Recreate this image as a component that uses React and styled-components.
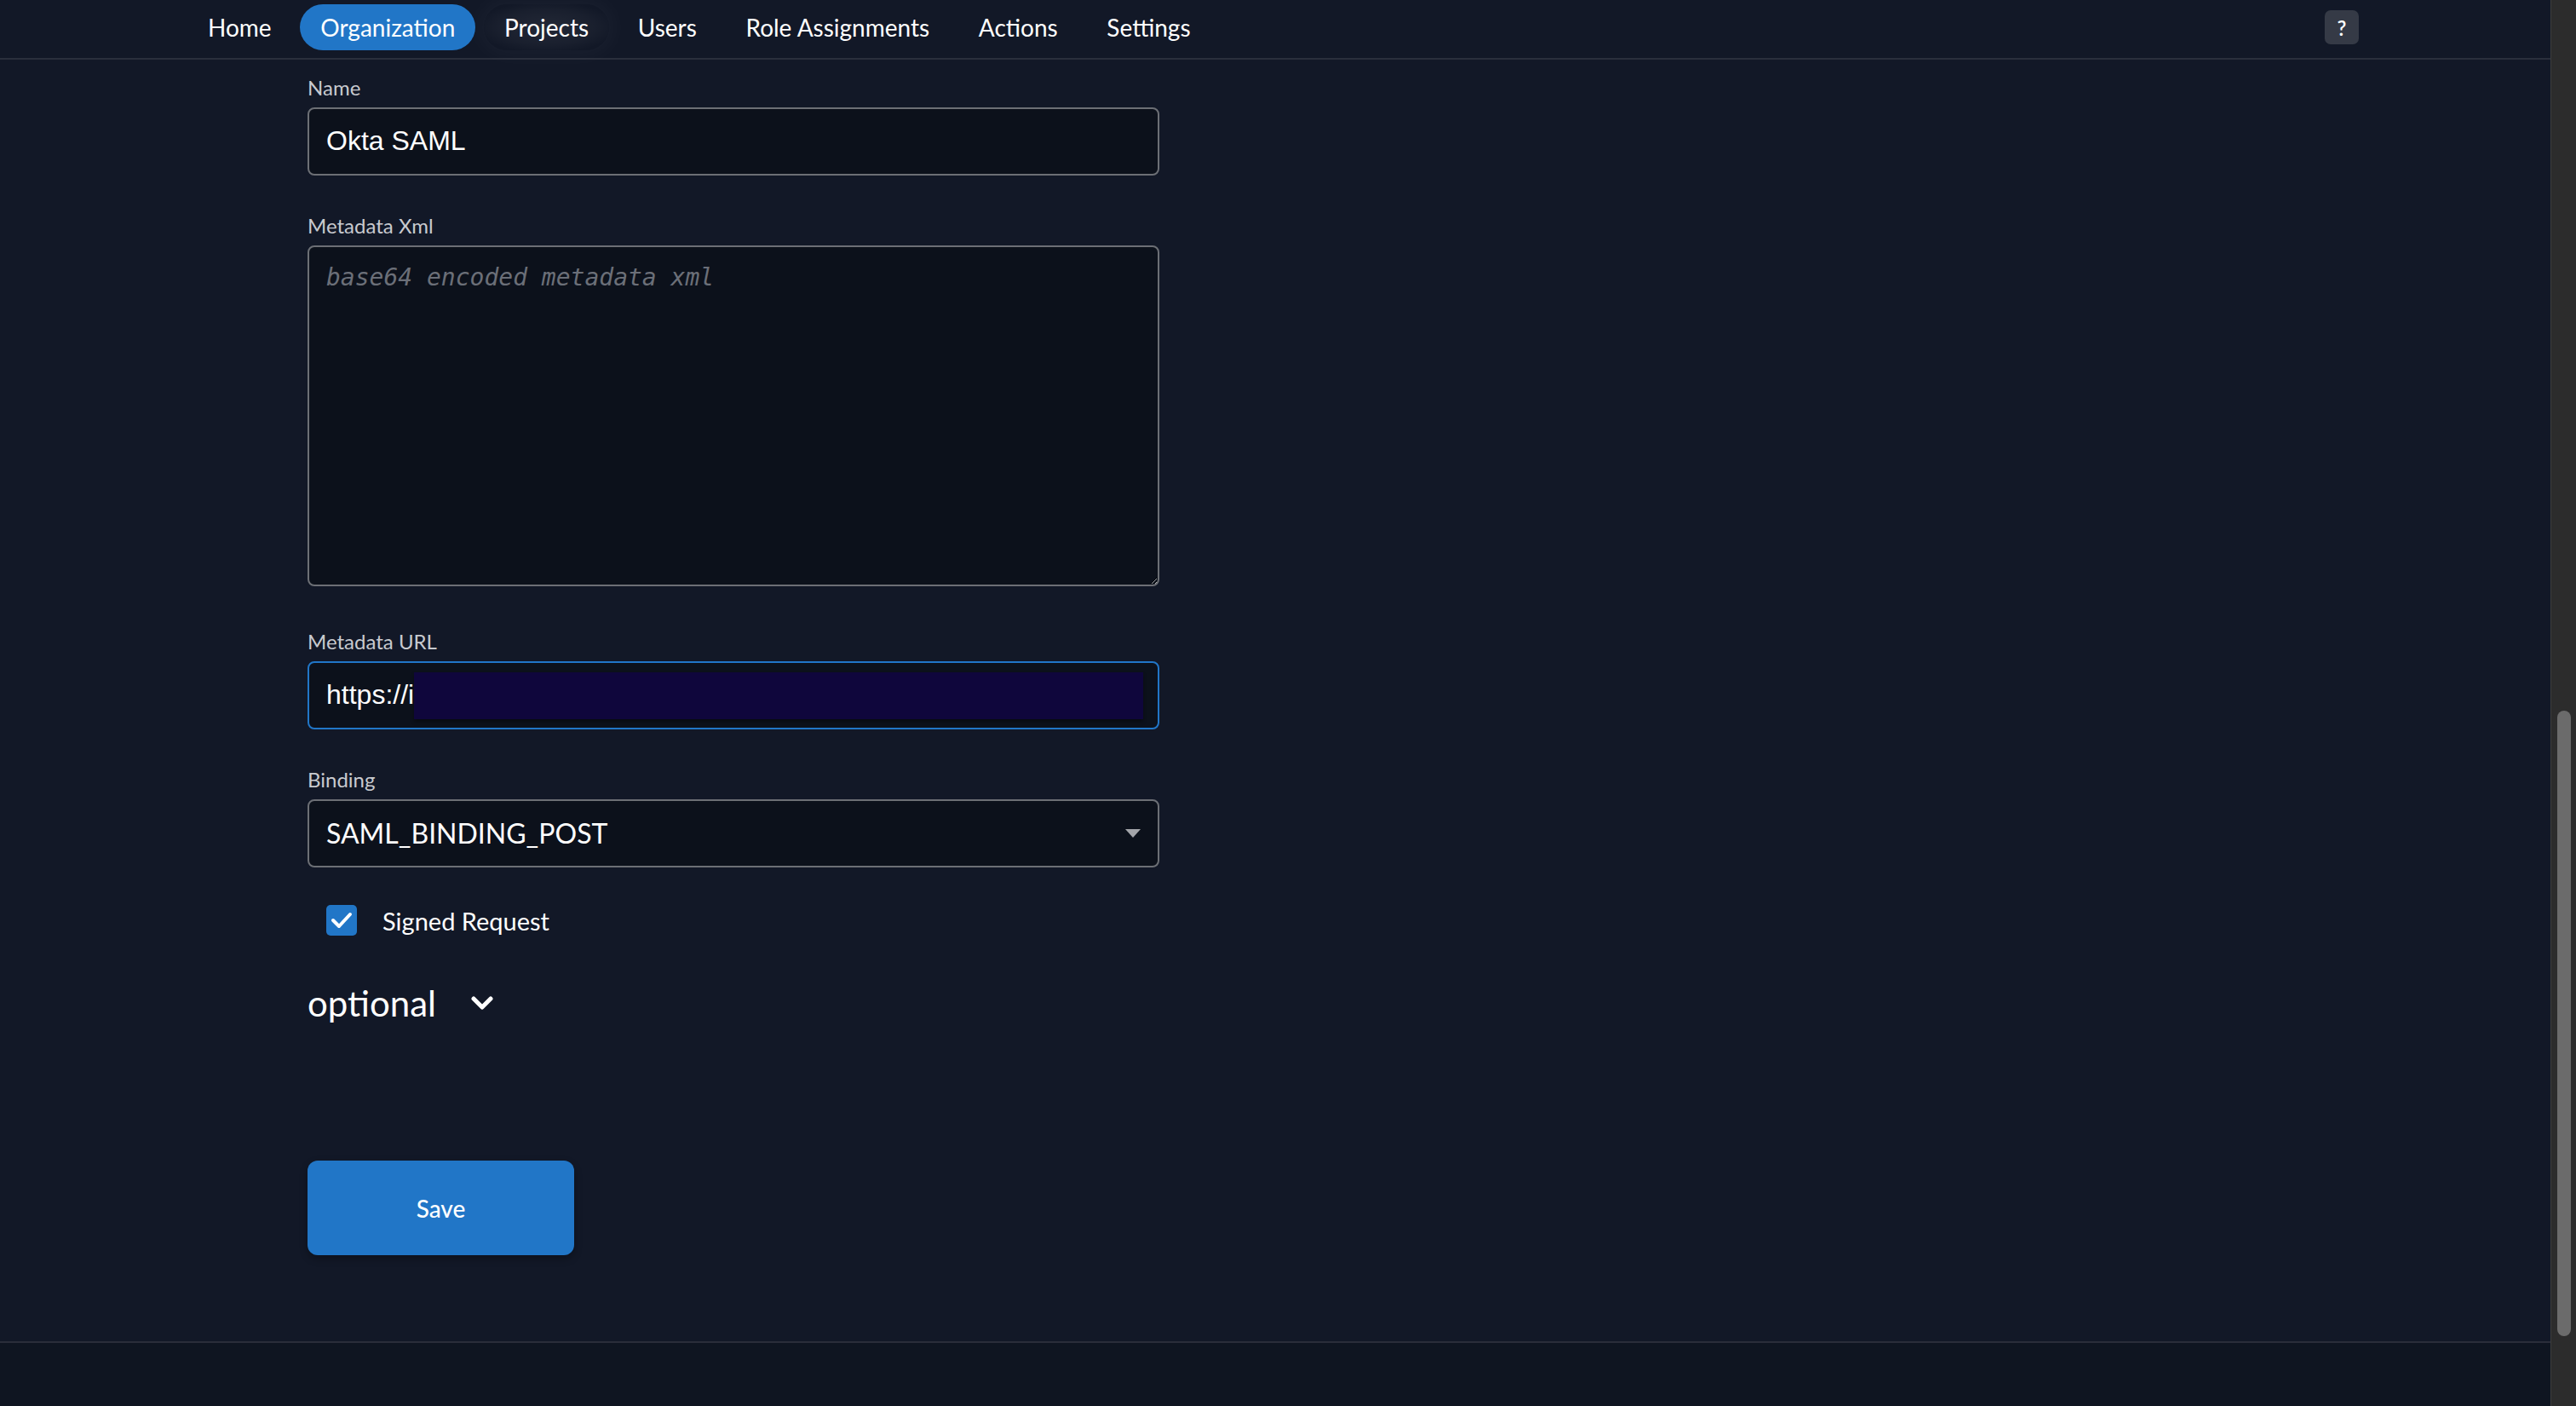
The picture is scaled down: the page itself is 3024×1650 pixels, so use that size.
import React from "react";
import styled, { createGlobalStyle } from "styled-components";

const GlobalStyle = createGlobalStyle`
  html, body {
    margin: 0;
    padding: 0;
    height: 100%;
    overflow: hidden;
    background: #121827;
  }
  #root {
    height: 100%;
  }
  * {
    box-sizing: border-box;
  }
`;

const Page = styled.div`
  display: flex;
  height: 100vh;
  width: 100%;
  font-family: "Lato", "Noto Sans", sans-serif;
  color: #fff;
`;

const MainColumn = styled.div`
  flex: 1;
  display: flex;
  flex-direction: column;
  min-width: 0;
`;

const TopNav = styled.nav`
  height: 70px;
  flex-shrink: 0;
  display: flex;
  align-items: center;
  justify-content: space-between;
  padding: 0 225px 4px 220px;
  background: #121827;
  border-bottom: 2px solid #2a2f3c;
`;

const NavList = styled.div`
  display: flex;
  align-items: center;
  gap: 9.7px;
`;

const NavItem = styled.a`
  height: 54px;
  display: flex;
  align-items: center;
  padding: 0 24px;
  border-radius: 27px;
  font-size: 28px;
  color: #fff;
  text-decoration: none;
  background: ${(p) =>
    p.$active
      ? "#2176c7"
      : p.$hover
      ? "radial-gradient(ellipse at center, rgba(255,255,255,0.07) 0%, rgba(255,255,255,0.03) 55%, rgba(255,255,255,0) 80%)"
      : "transparent"};
  box-shadow: ${(p) => (p.$hover ? "0 0 26px 6px rgba(255,255,255,0.035)" : "none")};
`;

const HelpButton = styled.button`
  width: 40px;
  height: 40px;
  border: none;
  border-radius: 7px;
  background: #353a46;
  color: #fff;
  font-family: "Lato", sans-serif;
  font-size: 24px;
  font-weight: 600;
  display: flex;
  align-items: center;
  justify-content: center;
  padding: 0;
`;

const Content = styled.main`
  flex: 1;
  padding: 18px 0 0 361px;
`;

const Form = styled.form`
  width: 1000px;
  display: flex;
  flex-direction: column;
`;

const Field = styled.div`
  display: flex;
  flex-direction: column;
  margin-bottom: ${(p) => (p.$extra ? 44 + p.$extra : 44)}px;
`;

const Label = styled.label`
  font-size: 24px;
  line-height: 30px;
  color: #c8cacf;
  margin-bottom: 8px;
`;

const TextInput = styled.input`
  height: 80px;
  width: 100%;
  background: #0c111b;
  border: 2px solid #6c6f75;
  border-radius: 8px;
  padding: 0 20px 2px;
  color: #fff;
  font-family: "Liberation Sans", Arial, sans-serif;
  font-size: 32px;
  outline: none;
`;

const TextArea = styled.textarea`
  display: block;
  height: 400px;
  width: 100%;
  background: #0c111b;
  border: 2px solid #6c6f75;
  border-radius: 8px;
  padding: 19px 20px;
  color: #fff;
  font-family: "DejaVu Sans Mono", "Liberation Mono", monospace;
  font-size: 28px;
  resize: vertical;
  outline: none;
  color-scheme: dark;

  &::placeholder {
    color: #6b6f78;
    font-style: italic;
  }
`;

const UrlBox = styled.div`
  height: 80px;
  display: flex;
  align-items: center;
  background: #0c111b;
  border: 2px solid #2176c7;
  border-radius: 8px;
  padding: 0 17px 0 20px;
`;

const UrlText = styled.span`
  font-family: "Liberation Sans", Arial, sans-serif;
  font-size: 32px;
  color: #fff;
  margin-top: -2px;
`;

const Redacted = styled.span`
  flex: 1;
  height: 55px;
  background: #0f063c;
  box-shadow: 0 3px 4px rgba(0, 0, 0, 0.35);
`;

const SelectWrap = styled.div`
  position: relative;
`;

const Select = styled.select`
  appearance: none;
  width: 100%;
  height: 80px;
  background: #0c111b;
  border: 2px solid #6c6f75;
  border-radius: 8px;
  padding: 0 60px 2px 20px;
  color: #fff;
  font-family: "Lato", sans-serif;
  font-size: 32px;
  outline: none;
`;

const Caret = styled.svg`
  position: absolute;
  right: 22px;
  top: 50%;
  transform: translateY(-50%);
  pointer-events: none;
`;

const CheckRow = styled.div`
  display: flex;
  align-items: center;
  gap: 30px;
  padding-left: 22px;
  height: 36px;
`;

const CheckBox = styled.span`
  width: 36px;
  height: 36px;
  border-radius: 5px;
  background: #2176c7;
  display: flex;
  align-items: center;
  justify-content: center;
`;

const CheckText = styled.span`
  font-size: 29px;
  color: #fff;
`;

const OptionalRow = styled.div`
  display: flex;
  align-items: center;
  margin-top: 54px;
  height: 50px;
`;

const OptionalTitle = styled.span`
  font-size: 42px;
  line-height: 50px;
  color: #fff;
`;

const Chevron = styled.svg`
  margin-left: 41px;
`;

const SaveButton = styled.button`
  margin-top: 160px;
  width: 313px;
  height: 111px;
  border: none;
  border-radius: 12px;
  background: #2176c7;
  color: #fff;
  font-family: "Lato", sans-serif;
  font-size: 28px;
  font-weight: 500;
  box-shadow: 0 4px 10px rgba(0, 0, 0, 0.3);
`;

const Footer = styled.footer`
  height: 76px;
  flex-shrink: 0;
  border-top: 2px solid #2a2d3a;
  background: #0f1521;
`;

const ScrollRail = styled.div`
  width: 30px;
  flex-shrink: 0;
  background: #2c2c2c;
  border-left: 1px solid #3d3d3d;
  padding: 834px 0 0 7px;
`;

const ScrollThumb = styled.div`
  width: 16px;
  height: 734px;
  border-radius: 8px;
  background: #6b6b6b;
`;

const navItems = ["Home", "Organization", "Projects", "Users", "Role Assignments", "Actions", "Settings"];

export default function App() {
  return (
    <>
      <GlobalStyle />
      <Page>
        <MainColumn>
          <TopNav>
            <NavList>
              {navItems.map((item) => (
                <NavItem key={item} $active={item === "Organization"} $hover={item === "Projects"}>
                  {item}
                </NavItem>
              ))}
            </NavList>
            <HelpButton type="button">?</HelpButton>
          </TopNav>

          <Content>
            <Form onSubmit={(e) => e.preventDefault()}>
              <Field>
                <Label>Name</Label>
                <TextInput defaultValue="Okta SAML" />
              </Field>

              <Field $extra={6}>
                <Label>Metadata Xml</Label>
                <TextArea placeholder="base64 encoded metadata xml" />
              </Field>

              <Field>
                <Label>Metadata URL</Label>
                <UrlBox>
                  <UrlText>https://i</UrlText>
                  <Redacted />
                </UrlBox>
              </Field>

              <Field>
                <Label>Binding</Label>
                <SelectWrap>
                  <Select defaultValue="SAML_BINDING_POST">
                    <option>SAML_BINDING_POST</option>
                    <option>SAML_BINDING_REDIRECT</option>
                  </Select>
                  <Caret width="18" height="10" viewBox="0 0 18 10">
                    <path d="M0 0 L18 0 L9 10 Z" fill="#a3a5aa" />
                  </Caret>
                </SelectWrap>
              </Field>

              <CheckRow>
                <CheckBox>
                  <svg width="26" height="22" viewBox="0 0 26 22">
                    <polyline
                      points="3,11 10,18 23,4"
                      fill="none"
                      stroke="#fff"
                      strokeWidth="4"
                      strokeLinecap="round"
                      strokeLinejoin="round"
                    />
                  </svg>
                </CheckBox>
                <CheckText>Signed Request</CheckText>
              </CheckRow>

              <OptionalRow>
                <OptionalTitle>optional</OptionalTitle>
                <Chevron width="26" height="18" viewBox="0 0 26 18">
                  <polyline
                    points="3,4 13,14 23,4"
                    fill="none"
                    stroke="#fff"
                    strokeWidth="5"
                    strokeLinecap="round"
                    strokeLinejoin="round"
                  />
                </Chevron>
              </OptionalRow>

              <div>
                <SaveButton type="submit">Save</SaveButton>
              </div>
            </Form>
          </Content>

          <Footer />
        </MainColumn>
        <ScrollRail>
          <ScrollThumb />
        </ScrollRail>
      </Page>
    </>
  );
}
